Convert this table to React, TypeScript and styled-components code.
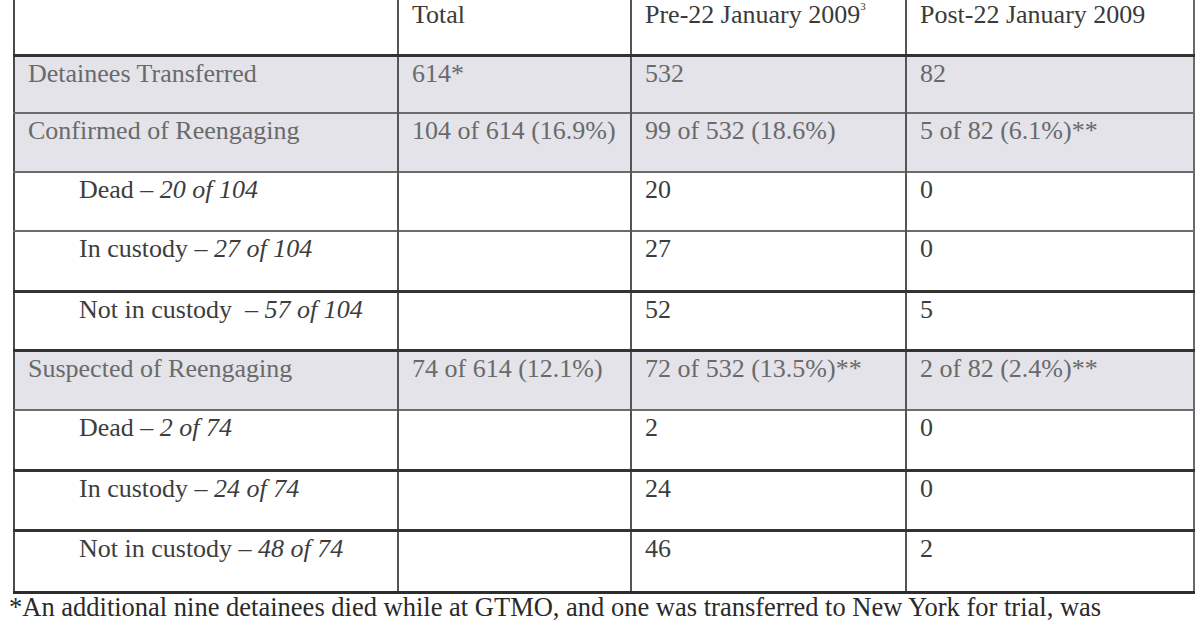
import React from "react";
import styled, { createGlobalStyle } from "styled-components";

const Global = createGlobalStyle`
  html, body { margin: 0; padding: 0; background: #ffffff; }
  body { font-family: "Liberation Serif", "Times New Roman", serif; }
`;

const Page = styled.div`
  width: 1200px;
  height: 630px;
  overflow: hidden;
  padding-left: 13px;
  box-sizing: border-box;
`;

const Table = styled.table`
  margin-top: -6px;
  width: 1180px;
  table-layout: fixed;
  border-collapse: collapse;
  font-size: 26px;
  line-height: 30px;
  border-left: 2px solid #4a4a4a;
  border-right: 2px solid #6a6a6a;
  border-bottom: 3px solid #2e2e2e;
`;

const Row = styled.tr<{ $shaded?: boolean; $height: number; $line?: "thick" | "thin" }>`
  background: ${(p) => (p.$shaded ? "#e3e3e9" : "#ffffff")};
  height: ${(p) => p.$height}px;
  border-bottom: ${(p) =>
    p.$line === "thick" ? "3px solid #333333" : "2px solid #6b6b6b"};
`;

const Cell = styled.td<{ $indent?: boolean; $head?: boolean; $shaded?: boolean }>`
  vertical-align: top;
  padding: ${(p) => (p.$head ? "6px" : "2px")} 8px 0
    ${(p) => (p.$indent ? "64px" : "13px")};
  border-left: 2px solid #555555;
  color: ${(p) => (p.$head ? "#3a3a3a" : p.$shaded ? "#6a6a6a" : "#3d3d3d")};
  white-space: nowrap;
  overflow: hidden;
  &:first-child { border-left: none; }
`;

const Em = styled.i`
  font-style: italic;
`;

const Sup = styled.sup`
  font-size: 11px;
  vertical-align: 13px;
  line-height: 0;
`;

const Footnote = styled.p`
  margin: -2px 0 0 -4px;
  padding: 0;
  font-size: 26.5px;
  line-height: 30px;
  color: #2a2a2a;
  white-space: nowrap;
`;

type Data = {
  label: React.ReactNode;
  total: string;
  pre: string;
  post: string;
  shaded?: boolean;
  indent?: boolean;
  line?: "thick" | "thin";
  height: number;
};

const rows: Data[] = [
  { label: "Detainees Transferred", total: "614*", pre: "532", post: "82", shaded: true, height: 58 },
  { label: "Confirmed of Reengaging", total: "104 of 614 (16.9%)", pre: "99 of 532 (18.6%)", post: "5 of 82 (6.1%)**", shaded: true, height: 59 },
  { label: <>Dead – <Em>20 of 104</Em></>, total: "", pre: "20", post: "0", indent: true, height: 59 },
  { label: <>In custody – <Em>27 of 104</Em></>, total: "", pre: "27", post: "0", indent: true, line: "thick", height: 60 },
  { label: <>Not in custody&nbsp; – <Em>57 of 104</Em></>, total: "", pre: "52", post: "5", indent: true, line: "thick", height: 59 },
  { label: "Suspected of Reengaging", total: "74 of 614 (12.1%)", pre: "72 of 532 (13.5%)**", post: "2 of 82 (2.4%)**", shaded: true, height: 60 },
  { label: <>Dead – <Em>2 of 74</Em></>, total: "", pre: "2", post: "0", indent: true, line: "thick", height: 60 },
  { label: <>In custody – <Em>24 of 74</Em></>, total: "", pre: "24", post: "0", indent: true, line: "thick", height: 60 },
  { label: <>Not in custody – <Em>48 of 74</Em></>, total: "", pre: "46", post: "2", indent: true, height: 62 },
];

export default function App() {
  return (
    <>
      <Global />
      <Page>
        <Table>
          <colgroup>
            <col style={{ width: 384 }} />
            <col style={{ width: 233 }} />
            <col style={{ width: 275 }} />
            <col style={{ width: 288 }} />
          </colgroup>
          <tbody>
            <Row $height={61} $line="thick">
              <Cell $head></Cell>
              <Cell $head>Total</Cell>
              <Cell $head>
                Pre-22 January 2009<Sup>3</Sup>
              </Cell>
              <Cell $head>Post-22 January 2009</Cell>
            </Row>
            {rows.map((r, i) => (
              <Row key={i} $shaded={r.shaded} $height={r.height} $line={r.line}>
                <Cell $indent={r.indent} $shaded={r.shaded}>{r.label}</Cell>
                <Cell $shaded={r.shaded}>{r.total}</Cell>
                <Cell $shaded={r.shaded}>{r.pre}</Cell>
                <Cell $shaded={r.shaded}>{r.post}</Cell>
              </Row>
            ))}
          </tbody>
        </Table>
        <Footnote>
          *An additional nine detainees died while at GTMO, and one was transferred to New York for trial, was
        </Footnote>
      </Page>
    </>
  );
}
